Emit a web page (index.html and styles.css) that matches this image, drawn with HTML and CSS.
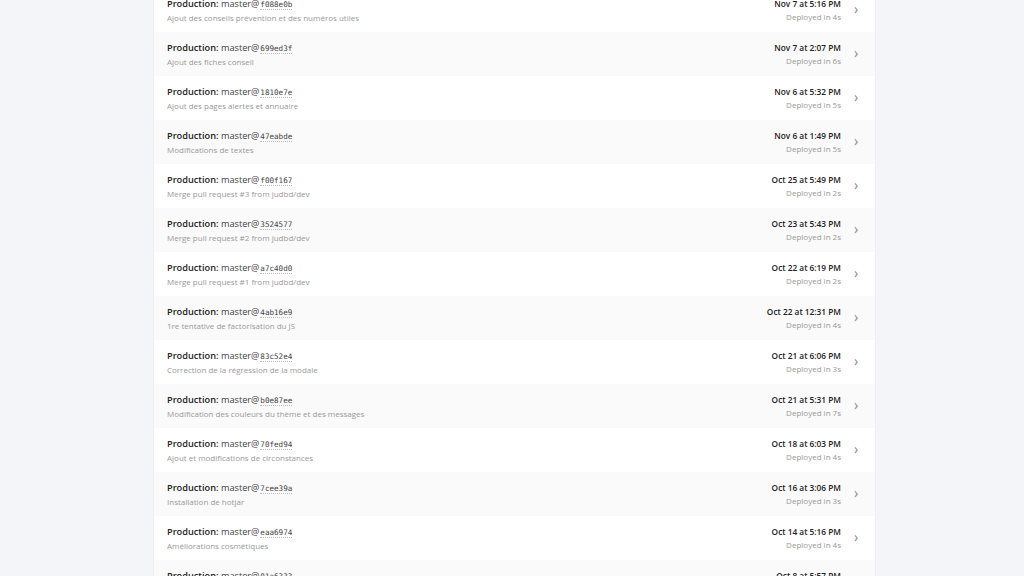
FILE: index.html
```html
<!DOCTYPE html>
<html>

<head>
    <meta charset="utf-8">
    <title>Deploys</title>
    <link rel="stylesheet" href="styles.css">
</head>

<body>

    <section class="deploys">
        <ul class="list">
            <li class="row">
                <div class="info">
                    <p class="title"><b>Production:</b> master@<code>f088e0b</code></p>
                    <p class="msg">Ajout des conseils prévention et des numéros utiles</p>
                </div>
                <div class="when">
                    <p class="date">Nov 7 at 5:16 PM</p>
                    <p class="time">Deployed in 4s</p>
                </div>
                <span class="chev">›</span>
            </li>
            <li class="row">
                <div class="info">
                    <p class="title"><b>Production:</b> master@<code>699ed3f</code></p>
                    <p class="msg">Ajout des fiches conseil</p>
                </div>
                <div class="when">
                    <p class="date">Nov 7 at 2:07 PM</p>
                    <p class="time">Deployed in 6s</p>
                </div>
                <span class="chev">›</span>
            </li>
            <li class="row">
                <div class="info">
                    <p class="title"><b>Production:</b> master@<code>1810e7e</code></p>
                    <p class="msg">Ajout des pages alertes et annuaire</p>
                </div>
                <div class="when">
                    <p class="date">Nov 6 at 5:32 PM</p>
                    <p class="time">Deployed in 5s</p>
                </div>
                <span class="chev">›</span>
            </li>
            <li class="row">
                <div class="info">
                    <p class="title"><b>Production:</b> master@<code>47eabde</code></p>
                    <p class="msg">Modifications de textes</p>
                </div>
                <div class="when">
                    <p class="date">Nov 6 at 1:49 PM</p>
                    <p class="time">Deployed in 5s</p>
                </div>
                <span class="chev">›</span>
            </li>
            <li class="row">
                <div class="info">
                    <p class="title"><b>Production:</b> master@<code>f00f167</code></p>
                    <p class="msg">Merge pull request #3 from judbd/dev</p>
                </div>
                <div class="when">
                    <p class="date">Oct 25 at 5:49 PM</p>
                    <p class="time">Deployed in 2s</p>
                </div>
                <span class="chev">›</span>
            </li>
            <li class="row">
                <div class="info">
                    <p class="title"><b>Production:</b> master@<code>3524577</code></p>
                    <p class="msg">Merge pull request #2 from judbd/dev</p>
                </div>
                <div class="when">
                    <p class="date">Oct 23 at 5:43 PM</p>
                    <p class="time">Deployed in 2s</p>
                </div>
                <span class="chev">›</span>
            </li>
            <li class="row">
                <div class="info">
                    <p class="title"><b>Production:</b> master@<code>a7c40d0</code></p>
                    <p class="msg">Merge pull request #1 from judbd/dev</p>
                </div>
                <div class="when">
                    <p class="date">Oct 22 at 6:19 PM</p>
                    <p class="time">Deployed in 2s</p>
                </div>
                <span class="chev">›</span>
            </li>
            <li class="row">
                <div class="info">
                    <p class="title"><b>Production:</b> master@<code>4ab16e9</code></p>
                    <p class="msg">1re tentative de factorisation du JS</p>
                </div>
                <div class="when">
                    <p class="date">Oct 22 at 12:31 PM</p>
                    <p class="time">Deployed in 4s</p>
                </div>
                <span class="chev">›</span>
            </li>
            <li class="row">
                <div class="info">
                    <p class="title"><b>Production:</b> master@<code>83c52e4</code></p>
                    <p class="msg">Correction de la régression de la modale</p>
                </div>
                <div class="when">
                    <p class="date">Oct 21 at 6:06 PM</p>
                    <p class="time">Deployed in 3s</p>
                </div>
                <span class="chev">›</span>
            </li>
            <li class="row">
                <div class="info">
                    <p class="title"><b>Production:</b> master@<code>b0e87ee</code></p>
                    <p class="msg">Modification des couleurs du thème et des messages</p>
                </div>
                <div class="when">
                    <p class="date">Oct 21 at 5:31 PM</p>
                    <p class="time">Deployed in 7s</p>
                </div>
                <span class="chev">›</span>
            </li>
            <li class="row">
                <div class="info">
                    <p class="title"><b>Production:</b> master@<code>70fed94</code></p>
                    <p class="msg">Ajout et modifications de circonstances</p>
                </div>
                <div class="when">
                    <p class="date">Oct 18 at 6:03 PM</p>
                    <p class="time">Deployed in 4s</p>
                </div>
                <span class="chev">›</span>
            </li>
            <li class="row">
                <div class="info">
                    <p class="title"><b>Production:</b> master@<code>7cee39a</code></p>
                    <p class="msg">Installation de hotjar</p>
                </div>
                <div class="when">
                    <p class="date">Oct 16 at 3:06 PM</p>
                    <p class="time">Deployed in 3s</p>
                </div>
                <span class="chev">›</span>
            </li>
            <li class="row">
                <div class="info">
                    <p class="title"><b>Production:</b> master@<code>eaa6974</code></p>
                    <p class="msg">Améliorations cosmétiques</p>
                </div>
                <div class="when">
                    <p class="date">Oct 14 at 5:16 PM</p>
                    <p class="time">Deployed in 4s</p>
                </div>
                <span class="chev">›</span>
            </li>
            <li class="row">
                <div class="info">
                    <p class="title"><b>Production:</b> master@<code>01a6333</code></p>
                    <p class="msg">Mise en place du site</p>
                </div>
                <div class="when">
                    <p class="date">Oct 8 at 5:57 PM</p>
                    <p class="time">Deployed in 3s</p>
                </div>
                <span class="chev">›</span>
            </li>
        </ul>
    </section>

</body>

</html>
```

FILE: styles.css
```css
/* General styles */

html {
    background-color: #f3f5f8;
    font-family: "Open Sans", sans-serif;
}

body {
    margin: 0;
    overflow: hidden;
}

* {
    box-sizing: border-box;
}

p {
    margin: 0;
}

/* deploy list */

.deploys {
    display: flex;
    justify-content: center;
    padding-left: 5px;
}

.list {
    list-style: none;
    margin: -12px 0 0;
    padding: 0;
    width: 723px;
    background-color: #fff;
    border-left: 1px solid #eceef1;
    border-right: 1px solid #eceef1;
}

.row {
    height: 44px;
    display: flex;
    align-items: center;
    padding: 0 14px 0 13px;
}

.row:nth-child(even) {
    background-color: #fafafa;
}

.info {
    flex: 1;
}

.title {
    font-size: 9.2px;
    color: #444;
    line-height: 13px;
}

.title b {
    color: #222;
    font-weight: 600;
}

.title code {
    font-family: "DejaVu Sans Mono", monospace;
    font-size: 7.6px;
    margin-left: 1px;
    border-bottom: 1px dotted #bbb;
}

.msg {
    font-size: 8px;
    color: #999;
    margin-top: 1px;
    line-height: 12px;
}

.when {
    text-align: right;
}

.date {
    font-size: 8.3px;
    font-weight: 600;
    color: #222;
    line-height: 13px;
}

.time {
    font-size: 8px;
    color: #999;
    margin-top: 1px;
    line-height: 12px;
}

.chev {
    width: 10px;
    margin-left: 10px;
    margin-top: -4px;
    color: #888;
    font-size: 14px;
    text-align: center;
}
```
